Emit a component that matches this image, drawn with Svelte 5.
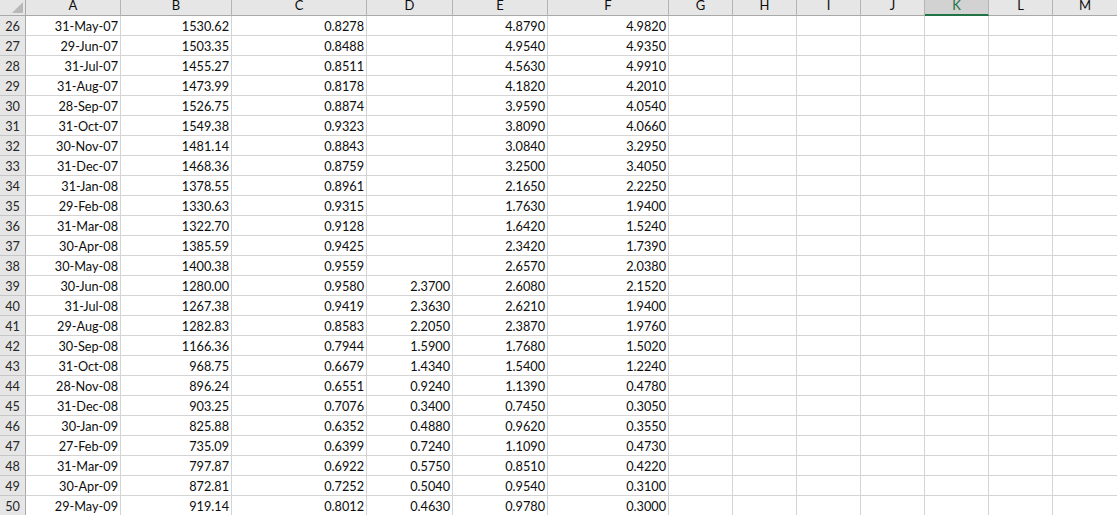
<script>
  const cols = ['A','B','C','D','E','F','G','H','I','J','K','L','M'];
  const raw = `31-May-07|1530.62|0.8278||4.8790|4.9820
29-Jun-07|1503.35|0.8488||4.9540|4.9350
31-Jul-07|1455.27|0.8511||4.5630|4.9910
31-Aug-07|1473.99|0.8178||4.1820|4.2010
28-Sep-07|1526.75|0.8874||3.9590|4.0540
31-Oct-07|1549.38|0.9323||3.8090|4.0660
30-Nov-07|1481.14|0.8843||3.0840|3.2950
31-Dec-07|1468.36|0.8759||3.2500|3.4050
31-Jan-08|1378.55|0.8961||2.1650|2.2250
29-Feb-08|1330.63|0.9315||1.7630|1.9400
31-Mar-08|1322.70|0.9128||1.6420|1.5240
30-Apr-08|1385.59|0.9425||2.3420|1.7390
30-May-08|1400.38|0.9559||2.6570|2.0380
30-Jun-08|1280.00|0.9580|2.3700|2.6080|2.1520
31-Jul-08|1267.38|0.9419|2.3630|2.6210|1.9400
29-Aug-08|1282.83|0.8583|2.2050|2.3870|1.9760
30-Sep-08|1166.36|0.7944|1.5900|1.7680|1.5020
31-Oct-08|968.75|0.6679|1.4340|1.5400|1.2240
28-Nov-08|896.24|0.6551|0.9240|1.1390|0.4780
31-Dec-08|903.25|0.7076|0.3400|0.7450|0.3050
30-Jan-09|825.88|0.6352|0.4880|0.9620|0.3550
27-Feb-09|735.09|0.6399|0.7240|1.1090|0.4730
31-Mar-09|797.87|0.6922|0.5750|0.8510|0.4220
30-Apr-09|872.81|0.7252|0.5040|0.9540|0.3100
29-May-09|919.14|0.8012|0.4630|0.9780|0.3000`;
  const rows = raw.split('\n').map((l, i) => {
    const c = l.split('|');
    while (c.length < 13) c.push('');
    return { n: 26 + i, c };
  });
</script>

<div class="sheet">
  <div class="corner"><span class="tri"></span></div>
  {#each cols as h}
    <div class="ch" class:sel={h === 'K'}>{h}</div>
  {/each}
  {#each rows as r}
    <div class="rh">{r.n}</div>
    {#each r.c as v}
      <div class="cell">{v}</div>
    {/each}
  {/each}
</div>

<style>
  :global(body) { margin: 0; background: #fff; overflow: hidden; }
  .sheet {
    display: grid;
    grid-template-columns: 26px 95px 111px 135px 86px 95px 121px 64px 64px 64px 64px 64px 64px 65px;
    grid-template-rows: 16px;
    grid-auto-rows: 20px;
    width: 1117px;
    height: 515px;
    overflow: hidden;
    font-family: "Lato", "Liberation Sans", sans-serif;
    font-size: 12.7px;
    color: #0d0d0d;
  }
  .corner, .ch, .rh { background: #e6e6e6; }
  .corner {
    position: relative;
    border-right: 1px solid #a9a9a9;
    border-bottom: 1px solid #a9a9a9;
    box-sizing: border-box;
  }
  .tri {
    position: absolute;
    right: 2px;
    bottom: 2px;
    width: 0;
    height: 0;
    border-left: 11px solid transparent;
    border-bottom: 11px solid #b8b8b8;
  }
  .ch {
    box-sizing: border-box;
    border-right: 1px solid #b4b4b4;
    border-bottom: 1px solid #a9a9a9;
    text-align: center;
    font-size: 13px;
    line-height: 11px;
  }
  .ch.sel {
    background: #d2d2d2;
    color: #1f6e43;
    border-bottom: 2px solid #217346;
  }
  .rh {
    box-sizing: border-box;
    border-right: 1px solid #a9a9a9;
    border-bottom: 1px solid #c6c6c6;
    text-align: center;
    padding-top: 1px;
    line-height: 19px;
    color: #262626;
  }
  .cell {
    box-sizing: border-box;
    border-right: 1px solid #d4d4d4;
    border-bottom: 1px solid #d4d4d4;
    text-align: right;
    padding-right: 2px;
    padding-top: 1px;
    line-height: 18px;
    white-space: nowrap;
  }
</style>
